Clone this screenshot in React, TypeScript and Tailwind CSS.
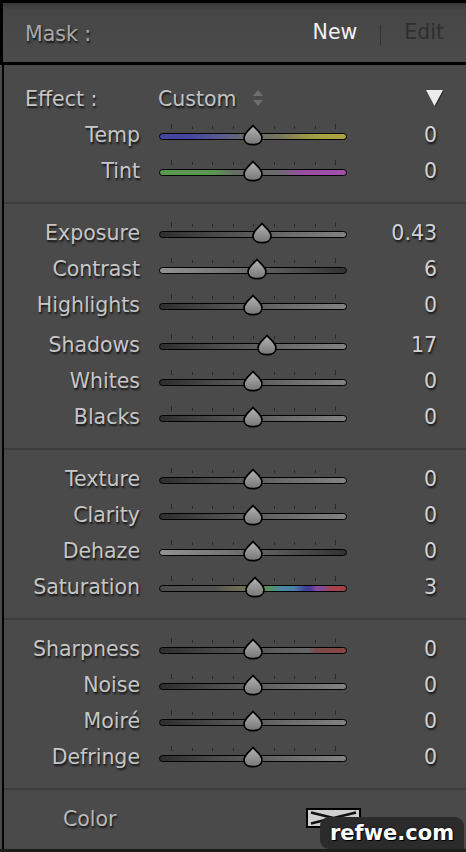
import React from "react";

type TrackKind =
  | "temp"
  | "tint"
  | "rise"
  | "fall"
  | "saturation"
  | "sharpness";

const trackBg: Record<TrackKind, string> = {
  temp: "bg-[linear-gradient(to_right,#4545a0_0%,#4747a0_17%,#5b5b8e_33%,#676776_45%,#6a6a6a_52%,#75755c_64%,#95914a_76%,#a7a142_87%,#aaa442_100%)]",
  tint: "bg-[linear-gradient(to_right,#5a9950_0%,#5b9751_28%,#656e63_40%,#6a6a6a_52%,#6c6a6d_64%,#964f9e_76%,#a350ab_100%)]",
  rise: "bg-[linear-gradient(to_right,#2e2e2e_0%,#4a4a4a_30%,#646464_60%,#828282_100%)]",
  fall: "bg-[linear-gradient(to_right,#929292_0%,#767676_35%,#565656_65%,#323232_100%)]",
  saturation:
    "bg-[linear-gradient(to_right,#4c4c4c_0%,#535353_30%,#66664f_38%,#737350_48%,#6a8256_54%,#56905a_59%,#4d8aa0_64%,#4a80a8_72%,#42429a_78%,#473c98_81%,#854c9c_84%,#834a98_88%,#a04450_91%,#a4404a_100%)]",
  sharpness:
    "bg-[linear-gradient(to_right,#2f2f2f_0%,#4a4a4a_35%,#5e5e5e_65%,#666666_80%,#7a4a4a_84%,#8a4646_100%)]",
};

type Row = { label: string; value: string; offset: number; track: TrackKind; gapAfter?: boolean };

const sections: { rows: Row[] }[] = [
  {
    rows: [
      { label: "Exposure", value: "0.43", offset: 8.5, track: "rise" },
      { label: "Contrast", value: "6", offset: 3.5, track: "fall" },
      { label: "Highlights", value: "0", offset: 0, track: "rise", gapAfter: true },
      { label: "Shadows", value: "17", offset: 14, track: "rise" },
      { label: "Whites", value: "0", offset: 0, track: "rise" },
      { label: "Blacks", value: "0", offset: 0, track: "rise" },
    ],
  },
  {
    rows: [
      { label: "Texture", value: "0", offset: 0, track: "rise" },
      { label: "Clarity", value: "0", offset: 0, track: "rise" },
      { label: "Dehaze", value: "0", offset: 0, track: "fall" },
      { label: "Saturation", value: "3", offset: 1.7, track: "saturation" },
    ],
  },
  {
    rows: [
      { label: "Sharpness", value: "0", offset: 0, track: "sharpness" },
      { label: "Noise", value: "0", offset: 0, track: "rise" },
      { label: "Moiré", value: "0", offset: 0, track: "rise" },
      { label: "Defringe", value: "0", offset: 0, track: "rise" },
    ],
  },
];

const shadow = "[text-shadow:1px_2px_2px_rgba(0,0,0,0.75)]";

function Thumb({ offset }: { offset: number }) {
  return (
    <svg
      width="22"
      height="22"
      viewBox="0 0 22 22"
      className="absolute top-[8px]"
      style={{ left: `calc(50% + ${offset}px - 11px)` }}
    >
      <defs>
        <linearGradient id="thumbFill" x1="0" y1="0" x2="0" y2="1">
          <stop offset="0" stopColor="#b6b6b6" />
          <stop offset="0.55" stopColor="#929292" />
          <stop offset="1" stopColor="#777777" />
        </linearGradient>
      </defs>
      <path
        d="M11 1.3 C12.6 4.4 20 8.6 20 14 C20 18.3 16 20.7 11 20.7 C6 20.7 2 18.3 2 14 C2 8.6 9.4 4.4 11 1.3 Z"
        fill="url(#thumbFill)"
        stroke="#000"
        strokeWidth="1.7"
        strokeLinejoin="round"
      />
    </svg>
  );
}

function Slider({ track, offset }: { track: TrackKind; offset: number }) {
  const ticks = [0, 1, 2, 3, 4, 5, 6, 7, 8];
  return (
    <div className="relative ml-[18px] flex h-full w-[190px] flex-col pt-[8px]">
      <div className="flex h-[5px] items-end justify-between pl-[13px] pr-[12px]">
        {ticks.map((t) => (
          <div
            key={t}
            className={
              t === 0 || t === 8
                ? "h-[5px] w-px bg-[#2a2a2a]"
                : "h-[3px] w-px bg-[#2a2a2a]"
            }
          />
        ))}
      </div>
      <div
        className={`mx-px mt-[4px] h-[7px] rounded-full border-[1.5px] border-black ${trackBg[track]}`}
      />
      <Thumb offset={offset} />
    </div>
  );
}

function SliderRow({ row }: { row: Row }) {
  return (
    <div className={row.gapAfter ? "mb-[4px] flex h-[36px] items-center" : "flex h-[36px] items-center"}>
      <div className={`w-[136px] pt-[2px] text-right text-[#c6c6c6] ${shadow}`}>
        {row.label}
      </div>
      <Slider track={row.track} offset={row.offset} />
      <div className={`w-[89px] pt-[2px] text-right text-[#d2d2d2] ${shadow}`}>
        {row.value}
      </div>
    </div>
  );
}

function Divider() {
  return <div className="h-[2px] w-full bg-[#3c3c3c]" />;
}

export default function App() {
  return (
    <div className="relative flex h-[852px] w-[466px] flex-col overflow-hidden bg-[#4a4a4a] font-['DejaVu_Sans',sans-serif] text-[20.5px] leading-none">
      {/* Mask header */}
      <div className="flex h-[65px] shrink-0 items-center border-b-[3px] border-l-[3px] border-t-[3px] border-black bg-[linear-gradient(to_bottom,#383838_0px,#464646_7px,#4b4b4b_100%)]">
        <div className={`pl-[22px] pt-[3px] text-[#a9a9a9] ${shadow}`}>Mask :</div>
        <div className="ml-auto flex items-center pr-[22px]">
          <span className="text-[#f2f2f2]">New</span>
          <span className="ml-[23px] mr-[23px] mt-[4px] h-[20px] w-px bg-[#333333]" />
          <span className="text-[#2f2f2f]">Edit</span>
        </div>
      </div>

      {/* Adjustment panel */}
      <div className="ml-[2px] flex flex-1 flex-col border-l-2 border-black">
        <div className="pb-[14px] pt-[15px]">
          <div className="flex h-[36px] items-center">
            <div className={`w-[136px] pl-[21px] pt-[2px] text-[#c6c6c6] ${shadow}`}>
              Effect :
            </div>
            <div className={`ml-[18px] pt-[2px] text-[#c2c2c2] ${shadow}`}>Custom</div>
            <svg width="12" height="18" viewBox="0 0 12 18" className="ml-[15px]">
              <path d="M6 1 L11 7 L1 7 Z" fill="#6e6e6e" />
              <path d="M6 17 L11 11 L1 11 Z" fill="#6e6e6e" />
            </svg>
            <svg width="22" height="22" viewBox="0 0 22 22" className="ml-auto mr-[20px]">
              <path d="M3 4 L20 4 L11.5 20 Z" fill="#1e1e1e" opacity="0.7" />
              <path d="M2 3 L19 3 L10.5 19 Z" fill="#ececec" />
            </svg>
          </div>
          <SliderRow row={{ label: "Temp", value: "0", offset: 0, track: "temp" }} />
          <SliderRow row={{ label: "Tint", value: "0", offset: 0, track: "tint" }} />
        </div>

        {sections.map((s, i) => (
          <React.Fragment key={i}>
            <Divider />
            <div className="pb-[14px] pt-[10px]">
              {s.rows.map((r) => (
                <SliderRow key={r.label} row={r} />
              ))}
            </div>
          </React.Fragment>
        ))}

        <Divider />
        <div className="pt-[10px]">
          <div className="flex h-[36px] items-center">
            <div className={`w-[302px] pl-[59px] pt-[2px] text-[#b8b8b8] ${shadow}`}>Color</div>
            <div className="h-[20px] w-[55px] border-2 border-black bg-[#cfcfcf]">
              <svg width="51" height="16" viewBox="0 0 51 16" className="block">
                <path d="M3 2.5 L48 13.5 M3 13.5 L48 2.5" stroke="#111" strokeWidth="2.6" />
              </svg>
            </div>
          </div>
        </div>
      </div>
      <div className="h-[3px] shrink-0 bg-[#1c1c1c]" />

      {/* site badge */}
      <div className="absolute bottom-[3px] right-[2px] flex h-[32px] w-[144px] items-center justify-center rounded-tl-[9px] rounded-bl-[9px] rounded-tr-[9px] bg-[#2b2b2b]">
        <span className="font-['DejaVu_Sans',sans-serif] text-[21px] font-bold text-white [text-shadow:0_0_2px_#000,1px_1px_0_#000]">
          refwe.com
        </span>
      </div>
    </div>
  );
}
